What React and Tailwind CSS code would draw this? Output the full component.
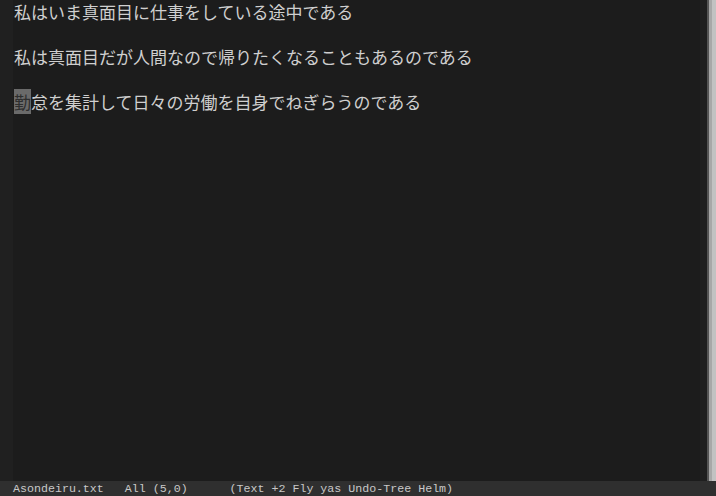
export default function App() {
  const lines = [
    '私はいま真面目に仕事をしている途中である',
    '',
    '私は真面目だが人間なので帰りたくなることもあるのである',
    '',
  ];

  return (
    <div className="flex h-[496px] w-[716px] flex-col overflow-hidden bg-[#1c1c1c]">
      <div className="flex min-h-0 flex-1">
        <div className="w-[13px] bg-[#202020]" />
        <div
          className="flex-1 pl-px pt-px text-[17px] leading-[22.5px] text-[#cfcfcf]"
          style={{ fontFamily: '"Noto Sans CJK JP", sans-serif' }}
        >
          {lines.map((t, i) => (
            <div key={i} className="h-[22.5px] whitespace-pre">{t}</div>
          ))}
          <div className="h-[22.5px] whitespace-pre">
            <span className="bg-[#6a6a6a] text-[#2e2e2e]">勤</span>
            怠を集計して日々の労働を自身でねぎらうのである
          </div>
        </div>
        <div className="w-[7px] bg-[#1f1f1f]" />
        <div className="w-[2px] bg-[#555]" />
        <div className="w-[3px] bg-[#a8a8a8]" />
        <div className="w-[4px] bg-[#c2c2c2]" />
      </div>
      <div
        className="flex h-[15px] items-center whitespace-pre bg-[#2f2f2f] pl-[13px] text-[11.65px] leading-[15px] text-[#c8c8c8]"
        style={{ fontFamily: '"Liberation Mono", monospace' }}
      >
        {'Asondeiru.txt   All (5,0)      (Text +2 Fly yas Undo-Tree Helm)'}
      </div>
    </div>
  );
}
